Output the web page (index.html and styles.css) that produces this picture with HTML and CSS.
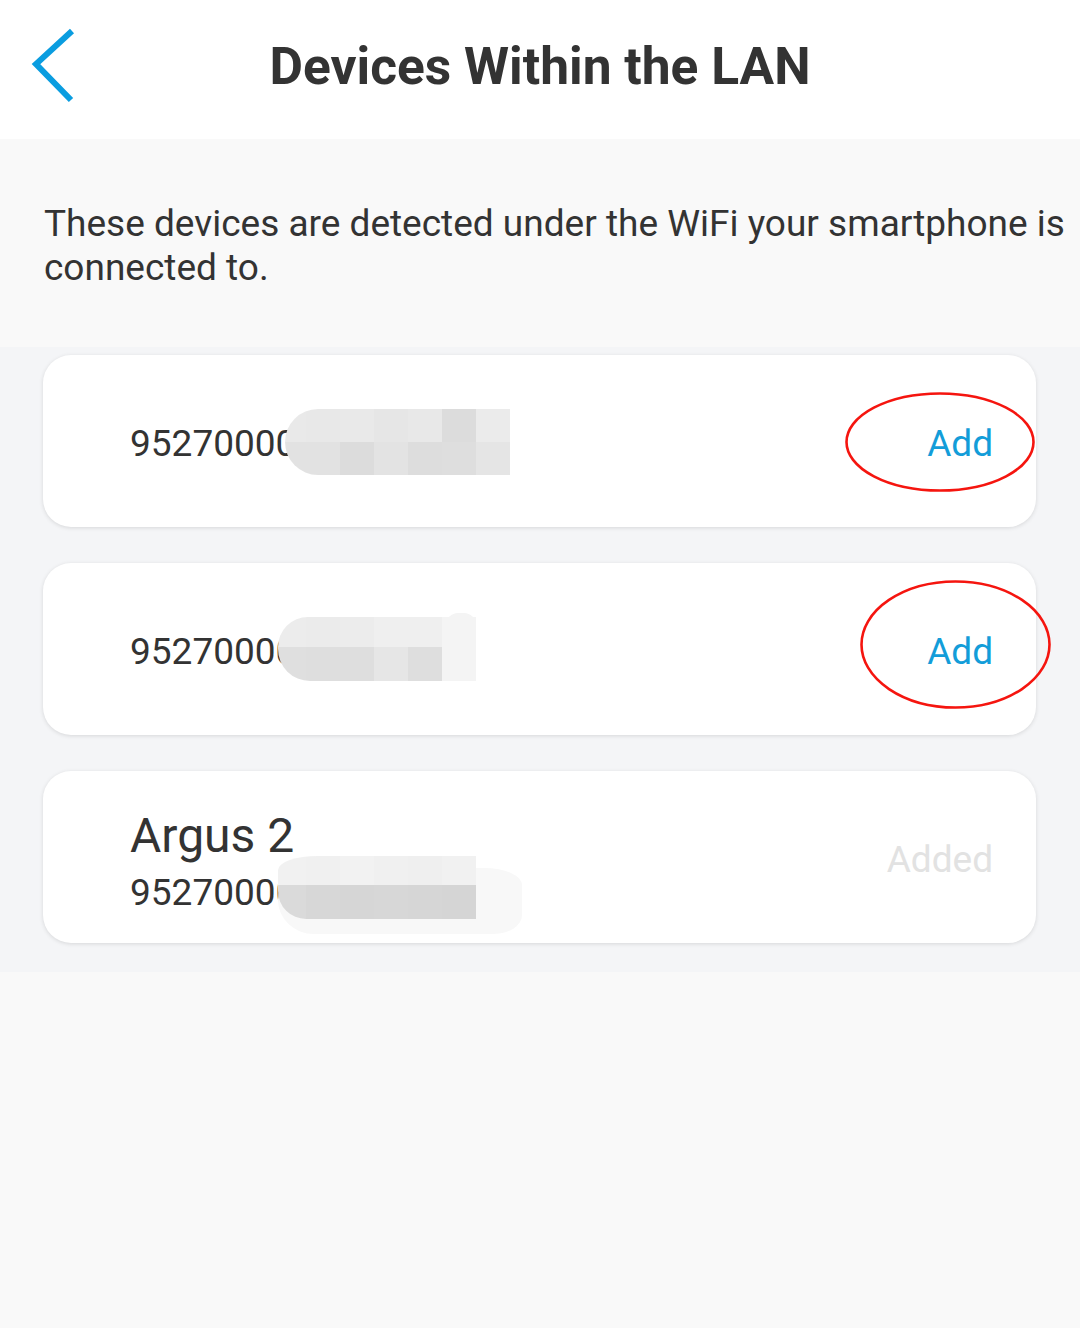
FILE: index.html
```html
<!DOCTYPE html>
<html lang="en">
<head>
<meta charset="utf-8">
<title>Devices Within the LAN</title>
<link rel="stylesheet" href="styles.css">
</head>
<body>
<div class="app">
  <header class="topbar">
    <div class="back">
      <svg width="50" height="80" viewBox="0 0 50 80" aria-hidden="true">
        <polyline points="41,4 5,37 40,73" fill="none" stroke="#0a9de0" stroke-width="6" stroke-linejoin="miter" stroke-linecap="butt"/>
      </svg>
    </div>
    <h1 class="title">Devices Within the LAN</h1>
    <div class="spacer"></div>
  </header>

  <section class="intro">
    <p>These devices are detected under the WiFi your smartphone is connected to.</p>
  </section>

  <section class="list">
    <div class="card">
      <div class="info">
        <div class="serial">95270000<span class="redact r1"><span class="row a"></span><span class="row b"></span></span></div>
      </div>
      <div class="action add">Add</div>
      <svg class="mark m1" width="192" height="102" viewBox="0 0 192 102" aria-hidden="true">
        <ellipse cx="96" cy="51" rx="93.5" ry="48.5" fill="none" stroke="#f5150f" stroke-width="2.6"/>
      </svg>
    </div>

    <div class="card">
      <div class="info">
        <div class="serial">95270000<span class="redact r2"><span class="row a"></span><span class="row b"></span><span class="bump"></span></span></div>
      </div>
      <div class="action add">Add</div>
      <svg class="mark m2" width="193" height="131" viewBox="0 0 193 131" aria-hidden="true">
        <ellipse cx="96.5" cy="65.5" rx="94" ry="63" fill="none" stroke="#f5150f" stroke-width="2.6"/>
      </svg>
    </div>

    <div class="card">
      <div class="info shifted">
        <div class="name">Argus 2</div>
        <div class="serial">95270000<span class="redact r3"><span class="tail"></span><span class="row a"></span><span class="row b"></span></span></div>
      </div>
      <div class="action added">Added</div>
    </div>
  </section>

  <div class="rest"></div>
</div>
</body>
</html>
```

FILE: styles.css
```css
* { box-sizing: border-box; }

html, body {
  margin: 0;
  padding: 0;
}

body {
  font-family: Roboto, "Noto Sans", "Liberation Sans", sans-serif;
  color: #333333;
  background: #f9f9f9;
  width: 1080px;
  min-height: 1328px;
}

.app {
  display: flex;
  flex-direction: column;
  min-height: 1328px;
}

.topbar {
  height: 139px;
  background: #ffffff;
  display: grid;
  grid-template-columns: 1fr auto 1fr;
  align-items: center;
  padding-bottom: 5px;
}

.back {
  padding-left: 31px;
  display: flex;
  align-items: center;
}

.back svg { display: block; }

.title {
  margin: 0;
  font-size: 51.5px;
  font-weight: 700;
  color: #333333;
  letter-spacing: 0;
  line-height: 60px;
}

.intro {
  background: #f9f9f9;
  padding: 63px 8px 57px 44px;
}

.intro p {
  margin: 0;
  font-size: 37px;
  line-height: 44px;
  color: #333333;
}

.list {
  background: #f4f5f7;
  padding: 8px 44px 29px 43px;
  display: flex;
  flex-direction: column;
  gap: 36px;
}

.card {
  position: relative;
  height: 172px;
  background: #ffffff;
  border-radius: 28px;
  box-shadow: 0 1px 4px rgba(0, 0, 0, 0.12);
  display: flex;
  align-items: center;
  justify-content: space-between;
  padding: 5px 43px 0 87px;
}

.info {
  display: flex;
  flex-direction: column;
}

.info.shifted {
  margin-top: 3px;
}

.name {
  font-size: 48px;
  line-height: 56px;
  margin-bottom: 7px;
  color: #333333;
}

.serial {
  position: relative;
  font-size: 37px;
  line-height: 44px;
  color: #333333;
}

.action {
  font-size: 37px;
  line-height: 44px;
}

.action.add { color: #139dd9; }
.action.added { color: #e2e2e2; }

.mark {
  position: absolute;
  display: block;
}

.m1 { left: 801px; top: 36px; }
.m2 { left: 816px; top: 16px; }

/* redaction blobs */
.redact {
  position: absolute;
  display: flex;
  flex-direction: column;
  overflow: hidden;
}

.redact .row { display: block; }

.r1 {
  left: 155px;
  top: -13px;
  width: 225px;
  border-radius: 33px 0 0 33px;
}
.r1 .a {
  height: 33px;
  background: linear-gradient(to right,
    #e9e9e9 0 21px, #e8e8e8 21px 55px, #e9e9e9 55px 89px, #e6e6e6 89px 123px,
    #e8e8e8 123px 157px, #dcdcdc 157px 191px, #ebebeb 191px 225px);
}
.r1 .b {
  height: 33px;
  background: linear-gradient(to right,
    #e2e2e2 0 21px, #e2e2e2 21px 55px, #dcdcdc 55px 89px, #e3e3e3 89px 123px,
    #dddddd 123px 157px, #dedede 157px 191px, #e5e5e5 191px 225px);
}

.r2 {
  left: 148px;
  top: -13px;
  width: 198px;
  border-radius: 32px 0 0 32px;
  overflow: visible;
}
.r2 .a {
  height: 30px;
  border-top-left-radius: 30px;
  background: linear-gradient(to right,
    #ececec 0 28px, #ebebeb 28px 62px, #ececec 62px 96px, #efefef 96px 130px,
    #efefef 130px 164px, #f4f4f4 164px 198px);
}
.r2 .b {
  height: 34px;
  border-bottom-left-radius: 32px;
  background: linear-gradient(to right,
    #dfdfdf 0 28px, #dedede 28px 62px, #dedede 62px 96px, #e6e6e6 96px 130px,
    #dedede 130px 164px, #f4f4f4 164px 198px);
}
.r2 .bump {
  position: absolute;
  right: 0;
  top: -4px;
  width: 30px;
  height: 12px;
  background: #f4f4f4;
  border-radius: 14px 14px 0 0;
}

.r3 {
  left: 148px;
  top: -15px;
  width: 244px;
  height: 82px;
  overflow: visible;
}
.r3 .tail {
  position: absolute;
  left: 0;
  top: 12px;
  width: 244px;
  height: 66px;
  background: #f8f8f8;
  border-radius: 34px 40px 30px 38px / 34px 18px 20px 36px;
}
.r3 .a {
  position: relative;
  width: 198px;
  height: 29px;
  border-top-left-radius: 40px 14px;
  background: linear-gradient(to right,
    #f1f1f1 0 28px, #f0f0f0 28px 62px, #f2f2f2 62px 96px, #f0f0f0 96px 130px,
    #efefef 130px 164px, #f1f1f1 164px 198px);
}
.r3 .b {
  position: relative;
  width: 198px;
  height: 34px;
  border-bottom-left-radius: 28px;
  background: linear-gradient(to right,
    #dadada 0 28px, #d7d7d7 28px 62px, #d6d6d6 62px 96px, #d7d7d7 96px 130px,
    #d6d6d6 130px 164px, #d5d5d5 164px 198px);
}

.rest {
  flex: 1;
  background: #f9f9f9;
}
```
